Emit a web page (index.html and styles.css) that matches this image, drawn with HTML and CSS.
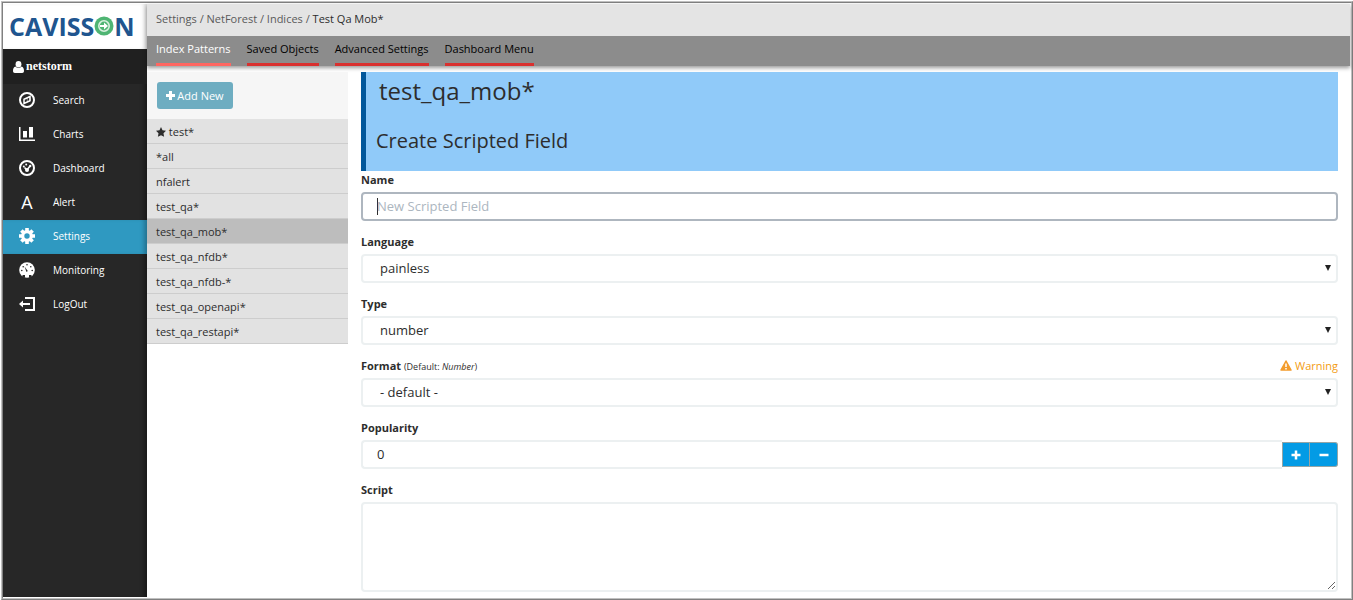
FILE: index.html
```
<!DOCTYPE html>
<html lang="en">
<head>
    <meta charset="UTF-8">
    <meta name="viewport" content="width=device-width, initial-scale=1.0">
    <title>Settings - NetForest</title>
    <link rel="stylesheet" href="styles.css">
</head>
<body>
    <div class="frame">
        <div class="app">
            <aside class="sidebar">
                <div class="logo">
                    <span>CAVISS</span>
                    <svg width="20" height="20" viewBox="0 0 20 20">
                        <circle cx="10" cy="10" r="9.5" fill="#4fb573"/>
                        <circle cx="10" cy="10" r="5.2" fill="none" stroke="#d8f0df" stroke-width="1.6"/>
                        <path d="M6 9h4V6.500l4 3.500-4 3.500V11H6z" fill="#fff"/>
                    </svg>
                    <span>N</span>
                </div>
                <div class="user">
                    <svg width="11" height="12" viewBox="0 0 11 12" fill="#fff">
                        <ellipse cx="5.500" cy="3.200" rx="2.900" ry="3.200"/>
                        <path d="M2.500 5.500C.8 6 0 7.500 0 10c0 1.300.7 2 1.800 2h7.400c1.100 0 1.800-.7 1.800-2 0-2.500-.8-4-2.500-4.500C7.500 7.400 3.500 7.400 2.500 5.500z"/>
                    </svg>
                    netstorm
                </div>
                <nav class="menu">
                    <a href="#search">
                        <svg width="16" height="16" viewBox="0 0 16 16" fill="none" stroke="#fff">
                            <circle cx="8" cy="8" r="7" stroke-width="2"/>
                            <path d="M11 4.500v4.200L5 11.500V7.300z" stroke-width="1.500"/>
                            <path d="M8 6l3-1.500v4.200L8.500 10z" stroke-width=".5"/>
                        </svg>
                        Search
                    </a>
                    <a href="#charts">
                        <svg width="16" height="16" viewBox="0 0 16 16" fill="#fff">
                            <path d="M0 1h1.500v12.500H16V15H0z"/>
                            <path d="M4 5h4v6.500H4zM10 1h4v10.500h-4z"/>
                        </svg>
                        Charts
                    </a>
                    <a href="#dashboard">
                        <svg width="16" height="16" viewBox="0 0 16 16">
                            <circle cx="8" cy="8" r="7" fill="none" stroke="#fff" stroke-width="2"/>
                            <circle cx="4.800" cy="6.500" r="1" fill="#fff"/>
                            <circle cx="7.200" cy="4.500" r="1" fill="#fff"/>
                            <circle cx="11.200" cy="6" r="1.200" fill="#fff"/>
                            <path d="M5.500 7.500L8 10l3-4" fill="none" stroke="#fff" stroke-width="1.500"/>
                            <circle cx="8" cy="10" r="2" fill="#fff"/>
                        </svg>
                        Dashboard
                    </a>
                    <a href="#alert">
                        <span class="letter">A</span>
                        Alert
                    </a>
                    <a href="#settings" class="active">
                        <svg width="16" height="16" viewBox="0 0 16 16">
                            <g stroke="#fff" stroke-width="3.600">
                                <path d="M8 0v3M8 13v3M0 8h3M13 8h3M2.400 2.400l2 2M11.600 11.600l2 2M2.400 13.600l2-2M11.600 4.400l2-2"/>
                            </g>
                            <circle cx="8" cy="8" r="4.300" fill="none" stroke="#fff" stroke-width="3.200"/>
                        </svg>
                        Settings
                    </a>
                    <a href="#monitoring">
                        <svg width="16" height="16" viewBox="0 0 16 16">
                            <circle cx="8" cy="8" r="7.800" fill="#fff"/>
                            <g fill="#272727">
                                <circle cx="2.800" cy="8.500" r=".8"/>
                                <circle cx="4.200" cy="4.800" r=".8"/>
                                <circle cx="8" cy="2.800" r=".8"/>
                                <circle cx="11.800" cy="4.800" r=".8"/>
                                <circle cx="13.200" cy="8.500" r=".8"/>
                                <path d="M5.500 4.500l3.300 4.600-1.300.9z"/>
                                <path d="M3.500 13h2.500v3l-2.500-1zM10 13h2.500v2l-2.500 1z"/>
                            </g>
                        </svg>
                        Monitoring
                    </a>
                    <a href="#logout">
                        <svg width="16" height="16" viewBox="0 0 16 16">
                            <path d="M6 2h9v12H6M2 8h9" fill="none" stroke="#fff" stroke-width="2"/>
                            <path d="M0 8l4-3.500v7z" fill="#fff"/>
                        </svg>
                        LogOut
                    </a>
                </nav>
            </aside>

            <div class="page">
                <header>
                    <div class="breadcrumb">
                        <a href="#settings">Settings</a> / <a href="#netforest">NetForest</a> / <a href="#indices">Indices</a> / <span>Test Qa Mob*</span>
                    </div>
                    <nav class="tabs">
                        <a href="#patterns" class="active">Index Patterns</a>
                        <a href="#objects">Saved Objects</a>
                        <a href="#advanced">Advanced Settings</a>
                        <a href="#menu">Dashboard Menu</a>
                    </nav>
                </header>

                <div class="content">
                    <section class="patterns">
                        <div class="patterns-top">
                            <button type="button" class="add-new">
                                <svg width="9" height="9" viewBox="0 0 9 9"><path d="M4.500 0v9M0 4.500h9" stroke="#fff" stroke-width="3"/></svg>
                                Add New
                            </button>
                        </div>
                        <ul>
                            <li><a href="#p1"><svg width="10" height="10" viewBox="0 0 10 10"><path d="M5 0l1.500 3.300 3.500.5-2.500 2.500.6 3.500L5 8.200 1.900 9.800l.6-3.500L0 3.800l3.500-.5z" fill="#2d2d2d"/></svg> test*</a></li>
                            <li><a href="#p2">*all</a></li>
                            <li><a href="#p3">nfalert</a></li>
                            <li><a href="#p4">test_qa*</a></li>
                            <li class="active"><a href="#p5">test_qa_mob*</a></li>
                            <li><a href="#p6">test_qa_nfdb*</a></li>
                            <li><a href="#p7">test_qa_nfdb-*</a></li>
                            <li><a href="#p8">test_qa_openapi*</a></li>
                            <li><a href="#p9">test_qa_restapi*</a></li>
                        </ul>
                    </section>

                    <main>
                        <div class="title">
                            <h1>test_qa_mob*</h1>
                            <h2>Create Scripted Field</h2>
                        </div>
                        <form>
                            <div class="form-group">
                                <label for="name">Name</label>
                                <input type="text" id="name" class="control focused" placeholder="New Scripted Field">
                            </div>
                            <div class="form-group">
                                <label for="language">Language</label>
                                <div class="select">
                                    <select id="language" class="control"><option>painless</option></select>
                                </div>
                            </div>
                            <div class="form-group">
                                <label for="type">Type</label>
                                <div class="select">
                                    <select id="type" class="control"><option>number</option></select>
                                </div>
                            </div>
                            <div class="form-group">
                                <div class="label-row">
                                    <label for="format">Format <small>(Default: <i>Number</i>)</small></label>
                                    <a href="#warning" class="warning">
                                        <svg width="12" height="11" viewBox="0 0 12 11">
                                            <path d="M6 1l5 9H1z" fill="#f39c2c" stroke="#f39c2c" stroke-width="1.500" stroke-linejoin="round"/>
                                            <path d="M6 3.500v3.500M6 8v1.500" stroke="#fff" stroke-width="1.500"/>
                                        </svg>
                                        Warning
                                    </a>
                                </div>
                                <div class="select">
                                    <select id="format" class="control"><option>- default -</option></select>
                                </div>
                            </div>
                            <div class="form-group">
                                <label for="popularity">Popularity</label>
                                <div class="stepper">
                                    <input type="text" id="popularity" class="control" value="0">
                                    <button type="button" aria-label="Plus"><svg width="10" height="10" viewBox="0 0 10 10"><path d="M5 .5v9M.5 5h9" stroke="#fff" stroke-width="2.500"/></svg></button>
                                    <button type="button" aria-label="Minus"><svg width="10" height="10" viewBox="0 0 10 10"><path d="M.5 5h9" stroke="#fff" stroke-width="2.500"/></svg></button>
                                </div>
                            </div>
                            <div class="form-group">
                                <label for="script">Script</label>
                                <textarea id="script" class="control"></textarea>
                            </div>
                        </form>
                    </main>
                </div>
            </div>
        </div>
    </div>
</body>
</html>
```

FILE: styles.css
```
* {
    box-sizing: border-box;
}
body {
    font-family: "Open Sans", "Noto Sans", sans-serif;
    font-size: 11px;
    color: #2d2d2d;
    background-color: #fff;
    margin: 0;
    padding: 1px 0 0 1px;
}
a {
    color: inherit;
    text-decoration: none;
}
.frame {
    border: 1px solid;
    border-color: #c0c0c0 #808080 #808080 #c0c0c0;
}
.app {
    display: flex;
    min-height: calc(100vh - 3px);
    border: 1px solid;
    border-color: #808080 #c0c0c0 #c0c0c0 #808080;
    padding: 1px 1px 1px 0;
}
.sidebar {
    width: 144px;
    flex-shrink: 0;
    background-color: #272727;
    color: #fff;
    box-shadow: inset -5px 0 4px -2px rgba(0, 0, 0, 0.35);
}
.logo {
    display: flex;
    align-items: center;
    height: 45px;
    padding: 0 0 2px 6px;
    background-color: #fff;
    color: #20558f;
    font-size: 25px;
    font-weight: 700;
    box-shadow: inset -5px 0 4px -2px rgba(0, 0, 0, 0.15);
}
.user {
    display: flex;
    align-items: center;
    gap: 2px;
    height: 35px;
    padding-left: 10px;
    background-color: #202020;
    font-family: "Liberation Serif", serif;
    font-size: 12px;
    font-weight: 700;
}
.menu a {
    display: flex;
    align-items: center;
    gap: 18px;
    height: 34px;
    padding: 0 0 2px 16px;
    font-size: 10px;
}
.menu .active {
    background-color: #2f99c1;
    box-shadow: inset -5px 0 4px -2px rgba(0, 0, 0, 0.25);
}
.letter {
    width: 16px;
    font-size: 18px;
    text-align: center;
}
.page {
    flex: 1;
    min-width: 0;
}
header {
    box-shadow: 0 2px 4px rgba(0, 0, 0, 0.4);
}
.breadcrumb {
    height: 32px;
    line-height: 30px;
    padding-left: 9px;
    background-color: #e4e4e4;
    color: #5a5a5a;
}
.breadcrumb span {
    color: #2d2d2d;
}
.tabs {
    display: flex;
    gap: 16px;
    height: 30px;
    padding-left: 9px;
    background-color: #8c8c8c;
    color: #000;
}
.tabs a {
    line-height: 25px;
    border-bottom: 3px solid #d9302f;
}
.tabs .active {
    color: #fff;
    border-color: #ff6661;
}
.content {
    display: flex;
    align-items: flex-start;
    gap: 13px;
    padding: 6px 12px 0 0;
}
.patterns {
    width: 201px;
    flex-shrink: 0;
    background-color: #f6f6f6;
}
.patterns-top {
    padding: 10px;
}
.add-new {
    display: flex;
    align-items: center;
    justify-content: center;
    gap: 2px;
    width: 76px;
    height: 27px;
    padding: 0;
    border: 0;
    border-radius: 3px;
    background-color: #6eadc1;
    color: #fff;
    font: inherit;
}
.patterns ul {
    list-style: none;
    margin: 0;
    padding: 0;
}
.patterns li {
    height: 25px;
    line-height: 25px;
    padding-left: 9px;
    background-color: #e2e2e2;
    border-bottom: 1px solid #cdcdcd;
}
.patterns li.active {
    background-color: #bdbdbd;
}
.patterns li svg {
    vertical-align: -1px;
}
main {
    flex: 1;
    min-width: 0;
}
.title {
    height: 99px;
    padding: 4px 10px 0;
    border-left: 5px solid #01579b;
    background-color: #90caf9;
}
.title h1 {
    margin: 0 0 20px 3px;
    font-size: 24px;
    line-height: 30px;
    font-weight: 500;
}
.title h2 {
    margin: 0;
    font-size: 20px;
    line-height: 30px;
    font-weight: 500;
}
form {
    padding-top: 1px;
}
.form-group {
    margin-bottom: 13px;
}
.form-group:last-child {
    margin-bottom: 4px;
}
label {
    display: block;
    height: 20px;
    line-height: 15px;
    font-weight: 700;
}
label small {
    font-size: 9px;
    font-weight: 400;
}
.label-row {
    display: flex;
    justify-content: space-between;
}
.warning {
    line-height: 15px;
    color: #f39c12;
}
.warning svg {
    vertical-align: -1px;
}
.control {
    display: block;
    width: 100%;
    height: 29px;
    padding: 0 14px 2px;
    border: 2px solid #ecf0f1;
    border-radius: 4px;
    background-color: #fff;
    color: #2d2d2d;
    font-family: inherit;
    font-size: 13px;
    outline: 0;
}
.control::placeholder {
    color: #acb6c0;
}
/* text cursor at the start of the empty field */
.focused {
    border-color: #aeb6bf;
    background-image: linear-gradient(#2d2d2d, #2d2d2d);
    background-repeat: no-repeat;
    background-size: 1px 17px;
    background-position: 14px center;
}
.select {
    position: relative;
}
.select .control {
    appearance: none;
    padding: 0 17px 2px;
}
.select::after {
    content: "";
    position: absolute;
    top: 11px;
    right: 7px;
    border: 3px solid transparent;
    border-top: 6px solid #222;
    border-bottom: 0;
    pointer-events: none;
}
.stepper {
    display: flex;
    align-items: center;
    height: 29px;
}
.stepper .control {
    flex: 1;
    min-width: 0;
    border-right: 0;
    border-radius: 4px 0 0 4px;
}
.stepper button {
    display: flex;
    align-items: center;
    justify-content: center;
    width: 28px;
    height: 25px;
    padding: 0;
    border: 1px solid #95a5a6;
    background-color: #039be5;
}
.stepper button:last-child {
    border-left: 0;
    border-radius: 0 3px 3px 0;
}
textarea.control {
    height: 90px;
}
```
